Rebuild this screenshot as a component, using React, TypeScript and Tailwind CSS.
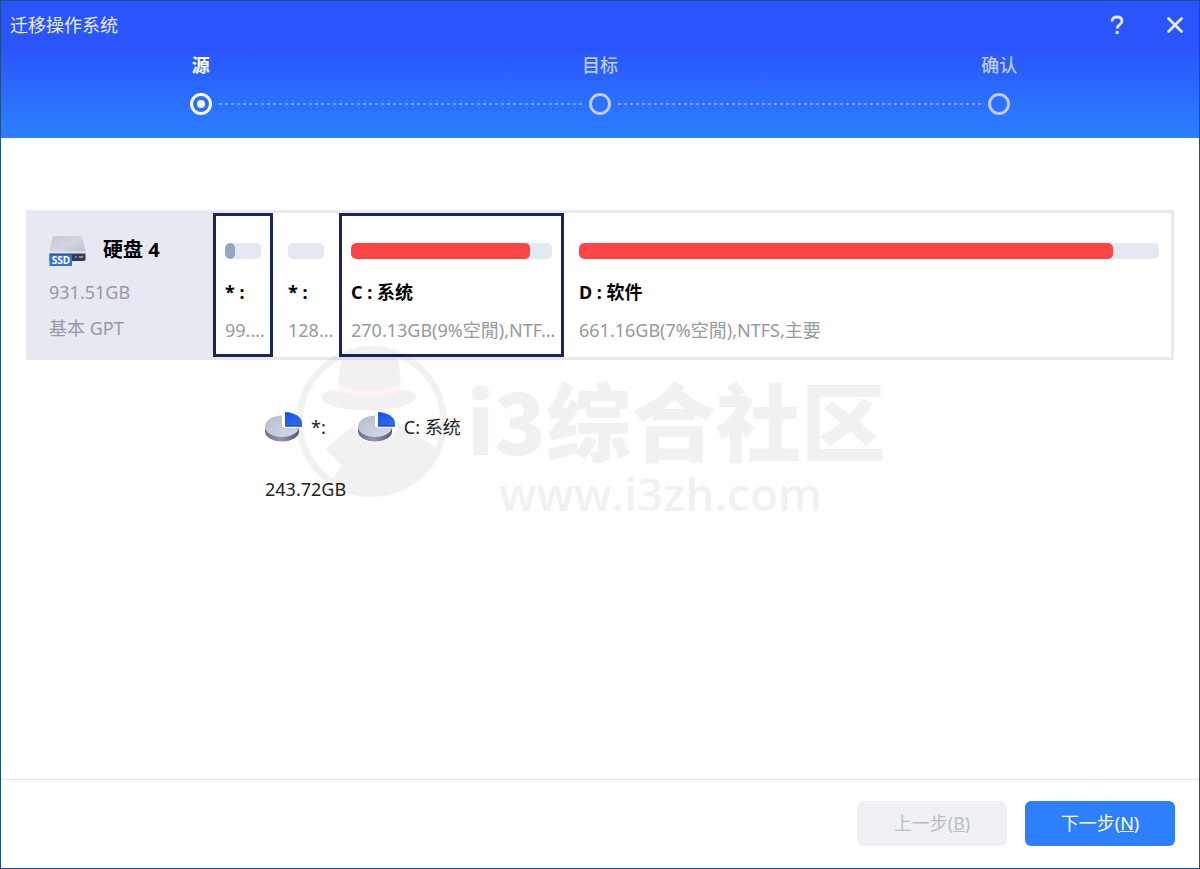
import { clsx } from 'clsx';

interface Partition {
  id: string;
  name: string;
  detail: string;
  used: number;
  selected: boolean;
  width: string;
  fill: string;
}

const STEPS = [
  { label: '源', active: true },
  { label: '目标', active: false },
  { label: '确认', active: false },
];

const PARTITIONS: Partition[] = [
  { id: 'efi', name: '* :', detail: '99....', used: 28, selected: true, width: 'w-[60px]', fill: 'bg-[#8fa8c6]' },
  { id: 'msr', name: '* :', detail: '128...', used: 0, selected: false, width: 'w-[60px]', fill: 'bg-[#8fa8c6]' },
  { id: 'c', name: 'C : 系统', detail: '270.13GB(9%空閒),NTF...', used: 89, selected: true, width: 'w-[225px]', fill: 'bg-[#fb4545]' },
  { id: 'd', name: 'D : 软件', detail: '661.16GB(7%空閒),NTFS,主要', used: 92, selected: false, width: 'flex-1', fill: 'bg-[#fb4545]' },
];

const SELECTION = [
  { id: 'efi', label: '*:' },
  { id: 'c', label: 'C: 系统' },
];

function DiskIcon() {
  return (
    <svg width="38" height="32" viewBox="0 0 38 32" aria-hidden="true">
      <defs>
        <linearGradient id="disk-top" x1="0" y1="0" x2="1" y2="1">
          <stop offset="0" stopColor="#c3c7d3" />
          <stop offset="0.5" stopColor="#d3d6e0" />
          <stop offset="1" stopColor="#b9becd" />
        </linearGradient>
      </defs>
      <path d="M6 2h25q2 0 2.500 2L36.500 17v3H.5v-3L3.500 4q.5-2 2.500-2z" fill="url(#disk-top)" />
      <path d="M.5 17.500h36V20H.5z" fill="#e4e7ef" />
      <path d="M.5 19.500h36V25q0 2-2 2H.5z" fill="#333a55" />
      <circle cx="27" cy="23" r="1" fill="#8d95ad" />
      <path d="M30 22h4v2h-4z" fill="#8d95ad" />
      <path d="M.5 20.500h22.500v11.500H.5z" fill="#2f74dc" />
      <text x="12" y="30" textAnchor="middle" fontSize="10" fontWeight="700" fill="#fff" fontFamily="Noto Sans, sans-serif">
        SSD
      </text>
    </svg>
  );
}

function PieIcon() {
  return (
    <svg width="37" height="30" viewBox="0 0 37 30" aria-hidden="true">
      <defs>
        <linearGradient id="pie-side" x1="0" y1="0" x2="1" y2="0">
          <stop offset="0" stopColor="#65708f" />
          <stop offset="0.450" stopColor="#8e98b5" />
          <stop offset="1" stopColor="#4d5877" />
        </linearGradient>
        <linearGradient id="pie-top" x1="0" y1="0" x2="1" y2="1">
          <stop offset="0" stopColor="#b5bccd" />
          <stop offset="1" stopColor="#d7dbe6" />
        </linearGradient>
        <linearGradient id="pie-slice" x1="0" y1="0" x2="1" y2="1">
          <stop offset="0" stopColor="#1c50e0" />
          <stop offset="1" stopColor="#3470f5" />
        </linearGradient>
      </defs>
      <path d="M0 15v4.500C0 25 7.500 29.500 17 29.500s17-4.500 17-10V15z" fill="url(#pie-side)" />
      <path d="M17 3.500C7.500 3.500 0 8.500 0 14.500S7.500 25 17 25s17-4.500 17-10H17z" fill="url(#pie-top)" />
      <path d="M17.500 3v12h17v1H19V3z" fill="#fff" />
      <path d="M20 0c9 0 17 5 17 11v3.500H20z" fill="url(#pie-slice)" />
      <path d="M20 13.500h17v1H20z" fill="#1a45b8" />
    </svg>
  );
}

function Watermark() {
  return (
    <div className="pointer-events-none absolute top-[345px] left-[295px] flex text-black opacity-5" aria-hidden="true">
      <svg width="151" height="151" viewBox="0 0 150 150">
        <path
          d="M75 0a75 75 0 1 0 0 150a75 75 0 1 0 0-150zM75 6.500a68.500 68.500 0 1 1 0 137a68.500 68.500 0 1 1 0-137z"
          fill="currentColor"
          fillRule="evenodd"
        />
        <path d="M42 38C43 20 45 11 50 7q22-9 48 0c4 6 5 15 6 31q-31 13-62 0z" fill="currentColor" />
        <path d="M42 38q31 13 62 0v6q-31 15-62 0z" fill="#ff3030" />
        <path d="M41 44q32 14 64 0c8-1 14 3 14 6 0 8-20 14-47 14S25 58 25 51c0-4 8-7 16-7z" fill="currentColor" />
        <path d="M29 102 58 78q1 16 18 18 22-1 26-18l41 25c-8 25-34 43-68 43q-21 0-38-14l8-14z" fill="currentColor" />
      </svg>
      <div className="mt-6 ml-5 whitespace-nowrap">
        <p className="font-['Noto_Sans_CJK_SC',sans-serif] text-[85px] leading-[96px] font-black">i3综合社区</p>
        <p className="pl-8 font-['Open_Sans',sans-serif] text-[46px] leading-[54px] font-semibold">www.i3zh.com</p>
      </div>
    </div>
  );
}

function StepHeader() {
  return (
    <nav className="mt-1" aria-label="步骤">
      <ol className="grid grid-cols-3 text-center leading-6">
        {STEPS.map((step) => (
          <li
            key={step.label}
            aria-current={step.active ? 'step' : undefined}
            className={clsx(step.active ? 'font-bold text-white' : 'font-medium text-[#b9cdff]')}
          >
            {step.label}
          </li>
        ))}
      </ol>
      <div className="mx-[calc(100%/6-11px)] mt-4 flex items-center gap-[7px]">
        {STEPS.map((step, index) => (
          <div key={step.label} className={clsx('flex items-center gap-[7px]', index > 0 && 'flex-1')}>
            {index > 0 && (
              <span className="h-[2px] flex-1 bg-[repeating-linear-gradient(90deg,#76a2ff_0_3px,transparent_3px_6px)]" />
            )}
            <span
              className={clsx(
                'flex size-[22px] items-center justify-center rounded-full border-3',
                step.active ? 'border-white' : 'border-[#b9cdff]',
              )}
            >
              {step.active && <span className="size-2 rounded-full bg-white" />}
            </span>
          </div>
        ))}
      </div>
    </nav>
  );
}

function PartitionCell({ partition }: { partition: Partition }) {
  return (
    <button
      type="button"
      aria-pressed={partition.selected}
      className={clsx(
        'flex shrink-0 flex-col border-3 px-[9px] pt-[27px] pb-[11px] text-left whitespace-nowrap',
        partition.width,
        partition.selected ? 'border-[#1a2560]' : 'border-transparent',
      )}
    >
      <span className="block h-4 w-full overflow-hidden rounded-[5px] bg-[#e3e9f2]">
        <span className={clsx('block h-full rounded-[5px]', partition.fill)} style={{ width: `${partition.used}%` }} />
      </span>
      <span className="mt-[21px] leading-6 font-bold text-black">{partition.name}</span>
      <span className="mt-[14px] leading-6 text-[#96999e]">{partition.detail}</span>
    </button>
  );
}

export default function App() {
  return (
    <div className="relative flex min-h-screen flex-col border border-[#1d4f8c] bg-white font-['Noto_Sans','Noto_Sans_CJK_SC',sans-serif] text-[18px]">
      <header className="bg-linear-to-b from-[#2c54fc] from-35% to-[#2b80ff] pb-[23px]">
        <div className="flex h-12 items-center justify-between pr-4 pl-[9px]">
          <h1 className="leading-6 text-[#eaf0ff]">迁移操作系统</h1>
          <div className="flex items-center gap-10">
            <button type="button" aria-label="帮助" className="text-[#e4ebff]">
              <svg width="18" height="20" viewBox="0 0 18 20" fill="none" aria-hidden="true">
                <path d="M3 6.500C3 3.500 5 2 8 2s5 1.700 5 4.300C13 9.500 8.300 9.500 8.300 13.500" stroke="currentColor" strokeWidth="2.800" />
                <circle cx="8.200" cy="17.500" r="1.800" fill="currentColor" />
              </svg>
            </button>
            <button type="button" aria-label="关闭" className="text-[#e4ebff]">
              <svg width="16" height="16" viewBox="0 0 16 16" fill="none" aria-hidden="true">
                <path d="M1.500 1.500l13 13M14.500 1.500l-13 13" stroke="currentColor" strokeWidth="2.800" strokeLinecap="round" />
              </svg>
            </button>
          </div>
        </div>
        <StepHeader />
      </header>

      <main className="flex-1 px-[25px] pt-[72px]">
        <section className="flex border-3 border-[#e9eaee] bg-white">
          <div className="-my-[3px] -ml-[3px] w-[187px] shrink-0 bg-[#e7e9f2] pt-6 pl-[23px]">
            <div className="flex items-center gap-4">
              <DiskIcon />
              <h2 className="text-[20px] leading-8 font-bold text-black">硬盘 4</h2>
            </div>
            <p className="mt-[14px] leading-6 text-[#96999e]">931.51GB</p>
            <p className="mt-3 leading-6 text-[#96999e]">基本 GPT</p>
          </div>
          <div className="flex min-h-36 min-w-0 flex-1 gap-[3px]">
            {PARTITIONS.map((partition) => (
              <PartitionCell key={partition.id} partition={partition} />
            ))}
          </div>
        </section>

        <section className="mt-[51px] ml-[239px] text-[#222]">
          <ul className="flex h-8 items-center gap-8">
            {SELECTION.map((item) => (
              <li key={item.id} className="flex items-center gap-[9px]">
                <PieIcon />
                <span className="leading-6">{item.label}</span>
              </li>
            ))}
          </ul>
          <p className="mt-[34px] leading-6">243.72GB</p>
        </section>
      </main>

      <footer className="flex justify-end gap-[18px] border-t border-[#e2e3e6] px-6 pt-[21px] pb-[22px]">
        <button type="button" disabled className="h-[45px] w-[150px] rounded-md bg-[#f0f1f5] text-[#b9bdc3]">
          上一步(<u>B</u>)
        </button>
        <button type="button" className="h-[45px] w-[150px] rounded-md bg-[#2d7ffb] text-white">
          下一步(<u>N</u>)
        </button>
      </footer>

      <Watermark />
    </div>
  );
}
